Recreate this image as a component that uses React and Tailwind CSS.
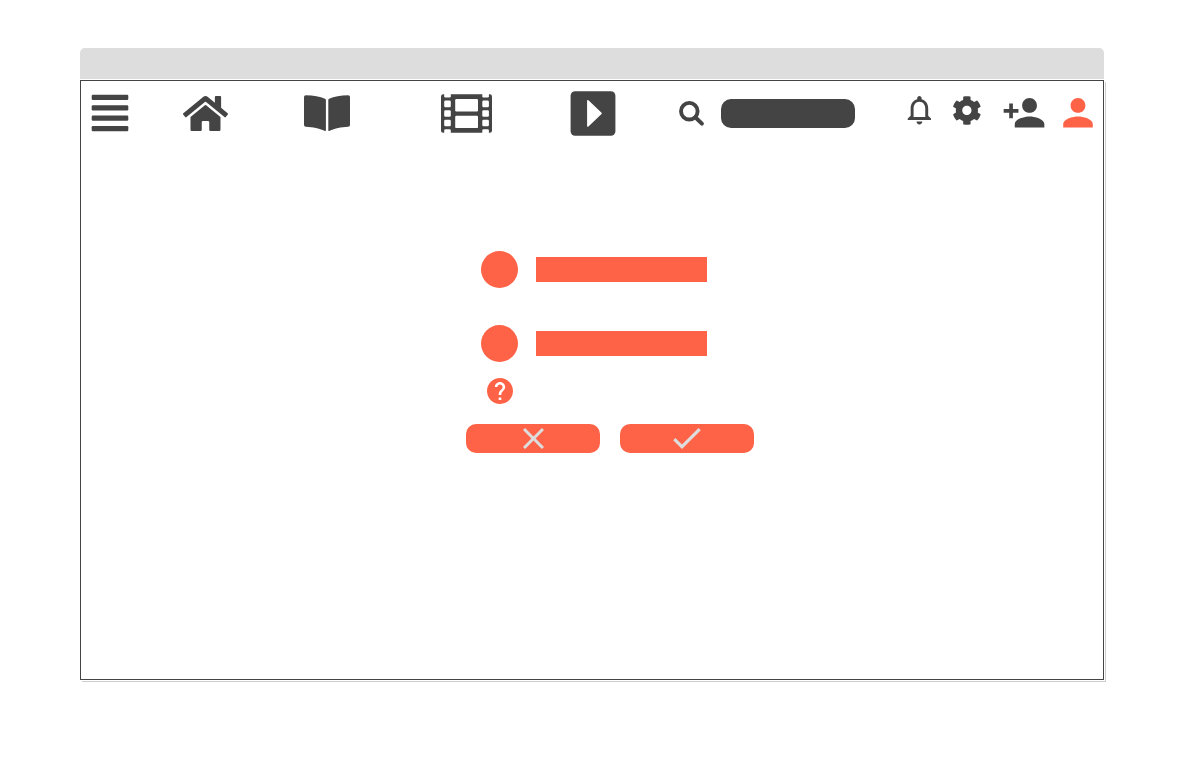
const PERSON =
  "M12 12c2.21 0 4-1.79 4-4s-1.79-4-4-4-4 1.79-4 4 1.79 4 4 4zm0 2c-2.67 0-8 1.34-8 4v2h16v-2c0-2.66-5.33-4-8-4z";
const PERSON_ADD =
  "M15 12c2.21 0 4-1.79 4-4s-1.79-4-4-4-4 1.79-4 4 1.79 4 4 4zm-9-2V7H4v3H1v2h3v3h2v-3h3v-2H6zm9 4c-2.67 0-8 1.34-8 4v2h16v-2c0-2.66-5.33-4-8-4z";
const BELL =
  "M12 22c1.1 0 2-.9 2-2h-4c0 1.1.9 2 2 2zm6-6v-5c0-3.07-1.63-5.64-4.5-6.32V4c0-.83-.67-1.5-1.5-1.5s-1.5.67-1.5 1.5v.68C7.64 5.36 6 7.92 6 11v5l-2 2v1h16v-1l-2-2zm-2 1H8v-6c0-2.48 1.51-4.5 4-4.5s4 2.02 4 4.5v6z";
const GEAR =
  "M487.4 315.7l-42.6-24.6c4.3-23.2 4.3-47 0-70.2l42.6-24.6c4.9-2.8 7.1-8.6 5.5-14-11.1-35.6-30-67.8-54.7-94.6-3.8-4.1-10-5.1-14.8-2.3L380.8 110c-17.9-15.4-38.5-27.3-60.8-35.1V25.8c0-5.6-3.9-10.5-9.4-11.7-36.7-8.2-74.3-7.8-109.2 0-5.5 1.2-9.4 6.1-9.4 11.7V75c-22.2 7.9-42.8 19.8-60.8 35.1L88.7 85.5c-4.9-2.8-11-1.9-14.8 2.3-24.7 26.7-43.6 58.9-54.7 94.6-1.7 5.4.6 11.2 5.5 14L67.3 221c-4.3 23.2-4.3 47 0 70.2l-42.6 24.6c-4.9 2.8-7.1 8.6-5.5 14 11.1 35.6 30 67.8 54.7 94.6 3.8 4.1 10 5.1 14.8 2.3l42.6-24.6c17.9 15.4 38.5 27.3 60.8 35.1v49.2c0 5.6 3.9 10.5 9.4 11.7 36.7 8.2 74.3 7.8 109.2 0 5.5-1.2 9.4-6.1 9.4-11.7v-49.2c22.2-7.9 42.8-19.8 60.8-35.1l42.6 24.6c4.9 2.8 11 1.9 14.8-2.3 24.7-26.7 43.6-58.9 54.7-94.6 1.5-5.5-.7-11.3-5.6-14.1zM256 336c-44.1 0-80-35.9-80-80s35.9-80 80-80 80 35.9 80 80-35.9 80-80 80z";
const HELP =
  "M12 2C6.48 2 2 6.48 2 12s4.48 10 10 10 10-4.48 10-10S17.52 2 12 2zm1 17h-2v-2h2v2zm2.07-7.75l-.9.92C13.45 12.9 13 13.5 13 15h-2v-.5c0-1.1.45-2.1 1.17-2.83l1.24-1.26c.37-.36.59-.86.59-1.41 0-1.1-.9-2-2-2s-2 .9-2 2H8c0-2.21 1.79-4 4-4s4 1.79 4 4c0 .88-.36 1.68-.93 2.25z";
const HOME =
  "M280.37 148.26L96 300.11V464a16 16 0 0 0 16 16l112.06-.29a16 16 0 0 0 15.92-16V368a16 16 0 0 1 16-16h64a16 16 0 0 1 16 16v95.64a16 16 0 0 0 16 16.05L464 480a16 16 0 0 0 16-16V300L295.67 148.26a12.19 12.19 0 0 0-15.3 0zM571.6 251.47L488 182.56V44.05a12 12 0 0 0-12-12h-56a12 12 0 0 0-12 12v72.61L318.47 43a48 48 0 0 0-61 0L4.34 251.47a12 12 0 0 0-1.6 16.9l25.5 31A12 12 0 0 0 45.15 301l235.22-193.74a12.19 12.19 0 0 1 15.3 0L530.9 301a12 12 0 0 0 16.9-1.6l25.5-31a12 12 0 0 0-1.7-16.93z";

function MenuIcon() {
  return (
    <svg viewBox="0 0 38 48" className="h-12 w-[38px]" fill="currentColor" aria-hidden="true">
      <rect x="0.7" y="4.7" width="36.6" height="5.2" rx="1.2" />
      <rect x="0.7" y="15.2" width="36.6" height="5.2" rx="1.2" />
      <rect x="0.7" y="25.6" width="36.6" height="5.2" rx="1.2" />
      <rect x="0.7" y="36.1" width="36.6" height="5.2" rx="1.2" />
    </svg>
  );
}

function HomeIcon() {
  return (
    <svg viewBox="0 0 46 48" className="h-12 w-[46px]" fill="currentColor" aria-hidden="true">
      <path d={HOME} transform="translate(0 3.600) scale(0.0781)" />
    </svg>
  );
}

function BookIcon() {
  return (
    <svg viewBox="0 0 46 48" className="h-12 w-[46px]" fill="currentColor" aria-hidden="true">
      <path d="M0 7Q0 5.2 1.8 5.2Q13.5 5.4 21 8.7Q21.9 9.1 21.9 10V40.3Q21.9 41.2 21 40.9C14.5 38.2 9.5 37.2 1.8 36.8Q0 36.7 0 35Z" />
      <path d="M46 7Q46 5.2 44.2 5.2Q32.5 5.4 25.2 8.7Q24.3 9.1 24.3 10V40.3Q24.3 41.2 25.2 40.9C31.5 38.2 36.5 37.2 44.2 36.8Q46 36.7 46 35Z" />
    </svg>
  );
}

function FilmIcon() {
  return (
    <svg viewBox="0 0 52 48" className="h-12 w-[52px]" aria-hidden="true">
      <rect x="0" y="4.2" width="51" height="38.5" rx="2.2" fill="currentColor" />
      <g fill="#fff">
        <rect x="14.2" y="9" width="22.8" height="12.4" rx="1.2" />
        <rect x="14.2" y="25.7" width="22.8" height="12.4" rx="1.2" />
        <path d="M3.2 3V6.3Q3.2 7.6 4.500 7.600H8.500Q9.800 7.600 9.800 6.300V3Z" />
        <path d="M41.300 3V6.300Q41.300 7.600 42.600 7.600H46.600Q47.900 7.600 47.900 6.300V3Z" />
        <path d="M3.200 44V40.600Q3.200 39.300 4.500 39.300H8.500Q9.800 39.300 9.800 40.600V44Z" />
        <path d="M41.300 44V40.600Q41.300 39.300 42.600 39.300H46.600Q47.900 39.300 47.900 40.600V44Z" />
        <rect x="3.200" y="10.600" width="6.600" height="6.600" rx="1.300" />
        <rect x="3.200" y="20.200" width="6.600" height="6.600" rx="1.300" />
        <rect x="3.200" y="29.700" width="6.600" height="6.600" rx="1.300" />
        <rect x="41.300" y="10.600" width="6.600" height="6.600" rx="1.300" />
        <rect x="41.300" y="20.200" width="6.600" height="6.600" rx="1.300" />
        <rect x="41.300" y="29.700" width="6.600" height="6.600" rx="1.300" />
      </g>
    </svg>
  );
}

function PlayIcon() {
  return (
    <svg viewBox="0 0 46 48" className="h-12 w-[46px]" aria-hidden="true">
      <rect x="0.6" y="1.2" width="44.8" height="44.6" rx="4.5" fill="currentColor" />
      <path
        d="M17.9 10.8L31 23.4L17.9 36Z"
        fill="#fff"
        stroke="#fff"
        strokeWidth="1.6"
        strokeLinejoin="round"
      />
    </svg>
  );
}

function SearchIcon() {
  return (
    <svg viewBox="0 0 26 48" className="h-12 w-[26px]" fill="none" stroke="currentColor" aria-hidden="true">
      <circle cx="10.3" cy="21.2" r="8.3" strokeWidth="3.9" />
      <path d="M16.8 27.7L22.9 33.6" strokeWidth="4" strokeLinecap="round" />
    </svg>
  );
}

function BellIcon() {
  return (
    <svg viewBox="0 0 24 48" className="h-12 w-6" fill="currentColor" aria-hidden="true">
      <path d={BELL} transform="translate(-5.1 2.3) scale(1.46)" />
    </svg>
  );
}

function GearIcon() {
  return (
    <svg viewBox="0 0 28 48" className="h-12 w-7" fill="currentColor" aria-hidden="true">
      <path d={GEAR} transform="translate(-0.9 5.7) scale(0.0577)" />
    </svg>
  );
}

function PersonAddIcon() {
  return (
    <svg viewBox="0 0 42 48" className="h-12 w-[42px]" fill="currentColor" aria-hidden="true">
      <path d={PERSON_ADD} transform="translate(-1.2 0.6) scale(1.85)" />
    </svg>
  );
}

function PersonIcon() {
  return (
    <svg viewBox="0 0 30 48" className="h-12 w-[30px]" fill="currentColor" aria-hidden="true">
      <path d={PERSON} transform="translate(-7.2 0.6) scale(1.85)" />
    </svg>
  );
}

function FieldRow({ id, label, type }) {
  return (
    <div className="flex items-center gap-[18px] pl-[15px]">
      <label htmlFor={id} aria-label={label} className="size-[37px] shrink-0 rounded-full bg-[#ff6347]" />
      <input id={id} type={type} className="h-[25px] w-[171px] bg-[#ff6347] px-2 text-sm text-white outline-none" />
    </div>
  );
}

export default function App() {
  return (
    <div className="min-h-screen bg-white px-20 py-12 font-['Liberation_Sans',sans-serif] text-[#444]">
      <div className="h-[31px] rounded-t-[5px] bg-[#ddd]" />
      <div className="mt-px min-h-[600px] border border-[#444] bg-white shadow-[1px_1px_0_#fff,2px_2px_0_#ccc]">
        <header className="flex justify-between pt-[9px] pr-[10px] pl-[10px]">
          <nav aria-label="Main" className="flex">
            <button type="button" aria-label="Menu">
              <MenuIcon />
            </button>
            <a href="#home" aria-label="Home" className="ml-[54px]">
              <HomeIcon />
            </a>
            <a href="#books" aria-label="Books" className="ml-[75px]">
              <BookIcon />
            </a>
            <a href="#films" aria-label="Films" className="ml-[91px]">
              <FilmIcon />
            </a>
            <a href="#videos" aria-label="Videos" className="ml-[77px]">
              <PlayIcon />
            </a>
          </nav>
          <form role="search" className="ml-[10px] flex gap-4">
            <label htmlFor="search" aria-label="Search">
              <SearchIcon />
            </label>
            <input
              id="search"
              type="search"
              className="mt-[9px] h-[29px] w-[134px] rounded-[10px] bg-[#444] px-3 text-sm text-white outline-none"
            />
          </form>
          <div className="flex">
            <button type="button" aria-label="Notifications">
              <BellIcon />
            </button>
            <button type="button" aria-label="Settings" className="ml-[22px]">
              <GearIcon />
            </button>
            <button type="button" aria-label="Add friend" className="ml-[22px]">
              <PersonAddIcon />
            </button>
            <a href="#profile" aria-label="Profile" className="ml-[18px] text-[#ff6347]">
              <PersonIcon />
            </a>
          </div>
        </header>
        <main className="flex justify-center pt-[113px] pl-9">
          <form aria-label="Account">
            <div className="flex flex-col gap-[37px]">
              <FieldRow id="username" label="Username" type="text" />
              <FieldRow id="password" label="Password" type="password" />
            </div>
            <button type="button" aria-label="Help" className="mt-4 ml-[21px] block">
              <svg viewBox="2 2 20 20" className="size-[26px]" fill="#ff6347" aria-hidden="true">
                <path d={HELP} />
              </svg>
            </button>
            <div className="mt-5 flex gap-5">
              <button
                type="button"
                aria-label="Cancel"
                className="flex h-[29px] w-[134px] items-center justify-center rounded-[10px] bg-[#ff6347]"
              >
                <svg viewBox="5 5 14 14" className="size-[21px]" fill="#ddd" aria-hidden="true">
                  <path d="M19 6.41L17.59 5 12 10.59 6.41 5 5 6.41 10.59 12 5 17.59 6.41 19 12 13.41 17.59 19 19 17.59 13.41 12z" />
                </svg>
              </button>
              <button
                type="submit"
                aria-label="Confirm"
                className="flex h-[29px] w-[134px] items-center justify-center rounded-[10px] bg-[#ff6347]"
              >
                <svg viewBox="3.41 5.59 17.59 13.41" className="h-[21px] w-7" fill="#ddd" aria-hidden="true">
                  <path d="M9 16.17L4.83 12l-1.42 1.41L9 19 21 7l-1.41-1.41z" />
                </svg>
              </button>
            </div>
          </form>
        </main>
      </div>
    </div>
  );
}
